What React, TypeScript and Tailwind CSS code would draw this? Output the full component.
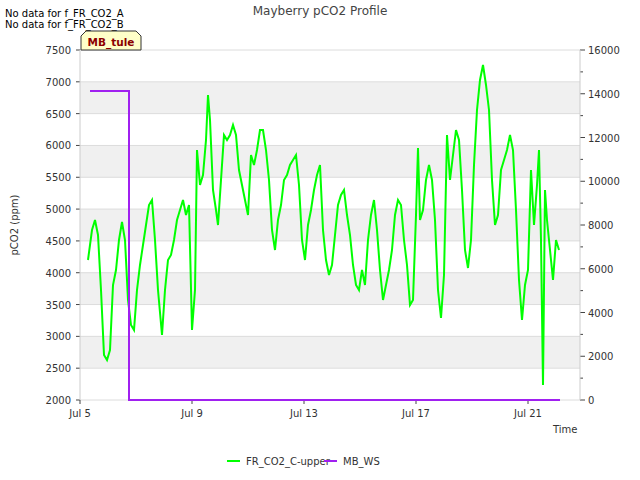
const green: [number, number][] = [
  [88,260],[92,230],[95,220],[98,235],[101,290],[104,355],[107,360],[110,350],[113,285],[116,270],[119,240],[122,222],[125,240],[128,300],[131,325],[134,330],[137,290],[140,265],[143,245],[146,225],[149,205],[152,200],[155,240],[158,290],[162,335],[165,290],[168,260],[171,255],[174,240],[177,220],[180,210],[183,200],[186,215],[189,205],[192,330],[195,290],[197,150],[200,185],[203,175],[206,140],[208,95],[210,120],[213,190],[216,210],[218,225],[221,180],[224,135],[227,140],[230,135],[233,125],[236,135],[239,170],[242,185],[245,200],[248,215],[251,155],[254,165],[257,150],[260,130],[263,130],[266,150],[269,180],[272,230],[275,250],[278,220],[281,205],[284,180],[287,175],[290,165],[293,160],[296,155],[299,185],[302,240],[305,260],[308,225],[311,210],[314,190],[317,175],[320,165],[323,230],[326,260],[329,275],[332,265],[335,235],[338,205],[341,195],[344,190],[347,215],[350,235],[353,265],[356,285],[359,290],[362,270],[365,285],[368,240],[371,215],[374,200],[377,230],[380,270],[383,300],[386,285],[389,270],[392,250],[395,215],[398,200],[401,205],[404,240],[407,265],[410,305],[413,300],[416,215],[418,148],[420,220],[423,210],[426,180],[429,165],[432,180],[435,220],[438,290],[441,318],[444,275],[447,135],[450,180],[453,155],[456,130],[459,140],[462,190],[465,250],[468,268],[471,240],[474,165],[477,110],[480,80],[483,65],[486,85],[489,110],[492,180],[495,225],[498,215],[501,170],[504,160],[507,150],[510,135],[513,150],[516,210],[519,280],[522,320],[525,285],[528,270],[531,170],[534,225],[537,185],[539,150],[541,240],[543,385],[545,190],[547,220],[550,250],[553,280],[556,240],[559,250],
];

const left = [2000, 2500, 3000, 3500, 4000, 4500, 5000, 5500, 6000, 6500, 7000, 7500];
const yL = (v: number) => 400 - ((v - 2000) / 5500) * 350;
const yR = (v: number) => 400 - (v / 16000) * 350;
const days = ['Jul 5', 'Jul 9', 'Jul 13', 'Jul 17', 'Jul 21'];

export default function App() {
  return (
    <div className="w-[640px] h-[480px] bg-white">
      <svg width={640} height={480} className="block" fontFamily='"DejaVu Sans", sans-serif'>
        {[2500, 3500, 4500, 5500, 6500].map((v) => (
          <rect key={v} x={80} y={yL(v + 500)} width={500} height={yL(v) - yL(v + 500)} fill="#f0f0f0" />
        ))}
        {left.map((v) => (
          <g key={v}>
            <line x1={80} x2={580} y1={yL(v)} y2={yL(v)} stroke="#dcdcdc" strokeWidth={1} />
            <line x1={76} x2={80} y1={yL(v)} y2={yL(v)} stroke="#444" />
            <text x={71} y={yL(v) + 4} fontSize={10} textAnchor="end" fill="#333">{v}</text>
          </g>
        ))}
        {Array.from({ length: 17 }, (_, i) => i * 1000).map((v) => (
          <line key={v} x1={580} x2={v % 2000 === 0 ? 585 : 583} y1={yR(v)} y2={yR(v)} stroke="#444" />
        ))}
        {Array.from({ length: 9 }, (_, i) => i * 2000).map((v) => (
          <text key={v} x={588} y={yR(v) + 4} fontSize={10} fill="#333">{v}</text>
        ))}
        {days.map((d, i) => (
          <g key={d}>
            <line x1={80 + i * 112} x2={80 + i * 112} y1={400} y2={404} stroke="#444" />
            <text x={80 + i * 112} y={417} fontSize={10} textAnchor="middle" fill="#333">{d}</text>
          </g>
        ))}
        <line x1={80} x2={80} y1={50} y2={400} stroke="#ccc" />
        <line x1={580} x2={580} y1={50} y2={400} stroke="#ccc" />
        <polyline points={green.map((p) => p.join(',')).join(' ')} fill="none" stroke="#00ff00" strokeWidth={2} />
        <polyline points="90,91 129,91 129,400 560,400" fill="none" stroke="#a020f0" strokeWidth={2} />
        <text x={320} y={15} fontSize={12} textAnchor="middle" fill="#444">Mayberry pCO2 Profile</text>
        <text x={5} y={17} fontSize={10} fill="#000">No data for f_FR_CO2_A</text>
        <text x={5} y={28} fontSize={10} fill="#000">No data for f_FR_CO2_B</text>
        <polygon points="81,50 81,36 86,31 136,31 141,36 141,50" fill="#ffffc8" stroke="#333" />
        <text x={111} y={46} fontSize={10.5} fontWeight="bold" textAnchor="middle" fill="#8b0000">MB_tule</text>
        <text x={18} y={225} fontSize={10} textAnchor="middle" fill="#333" transform="rotate(-90 18 225)">pCO2 (ppm)</text>
        <text x={553} y={433} fontSize={10} fill="#333">Time</text>
        <line x1={227} x2={240} y1={461} y2={461} stroke="#00ff00" strokeWidth={2} />
        <text x={246} y={465} fontSize={10} fill="#333">FR_CO2_C-upper</text>
        <line x1={324} x2={337} y1={461} y2={461} stroke="#a020f0" strokeWidth={2} />
        <text x={343} y={465} fontSize={10} fill="#333">MB_WS</text>
      </svg>
    </div>
  );
}
